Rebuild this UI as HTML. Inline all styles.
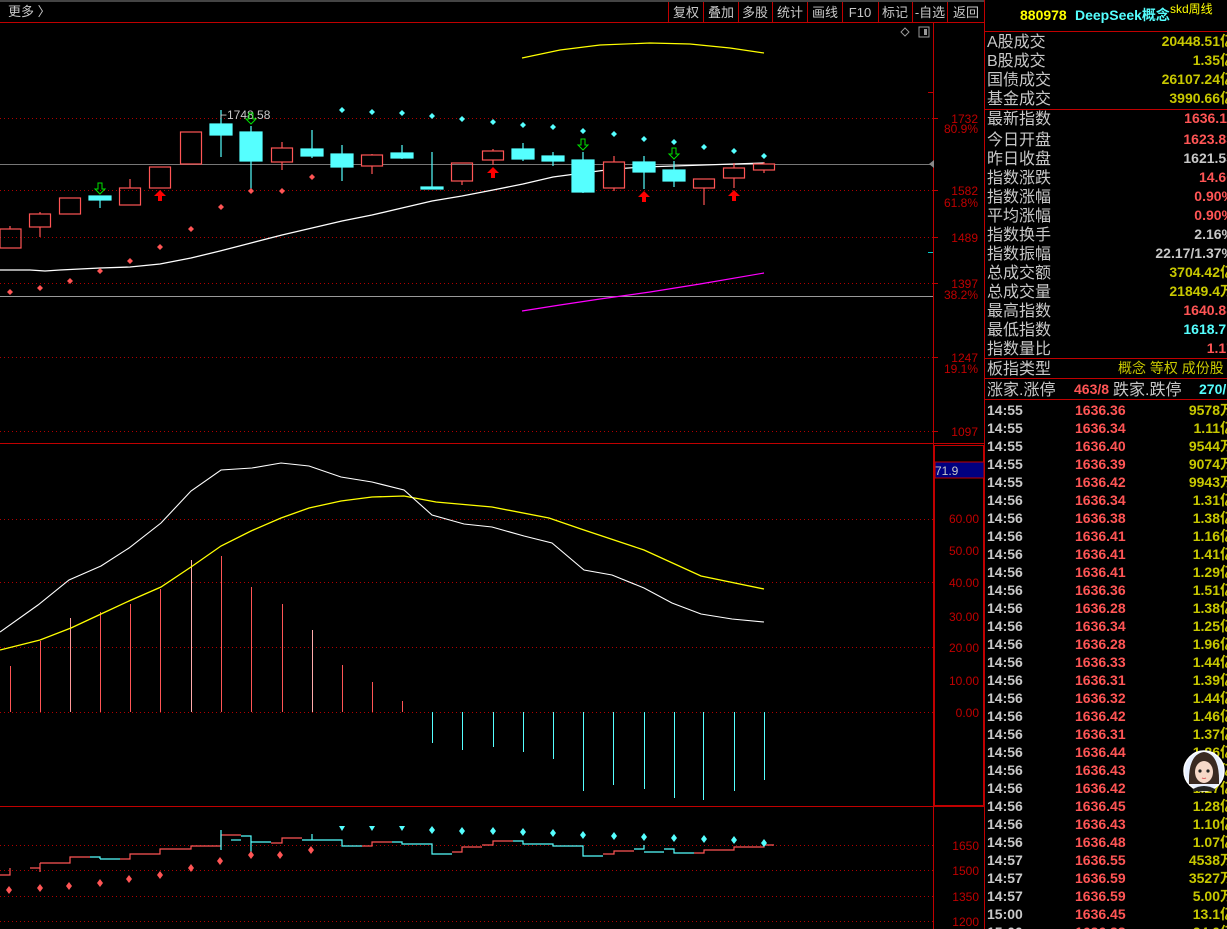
<!DOCTYPE html>
<html><head><meta charset="utf-8"><style>
html,body{margin:0;padding:0;background:#000;overflow:hidden}
svg{display:block}
text{font-family:"Liberation Sans","Noto Sans CJK SC",sans-serif}
</style></head><body>
<svg width="1227" height="929" viewBox="0 0 1227 929" xmlns="http://www.w3.org/2000/svg">
<rect width="1227" height="929" fill="#000"/>
<line x1="0" y1="1" x2="985" y2="1" stroke="#888"/>
<line x1="0" y1="22.5" x2="985" y2="22.5" stroke="#c00000"/>
<text x="8" y="16" font-size="13" fill="#c8c8c8">更多 〉</text>
<g stroke="#c00000">
<line x1="668.5" y1="2" x2="668.5" y2="22"/><line x1="703.5" y1="2" x2="703.5" y2="22"/><line x1="738.5" y1="2" x2="738.5" y2="22"/><line x1="772.5" y1="2" x2="772.5" y2="22"/><line x1="807.5" y1="2" x2="807.5" y2="22"/><line x1="842.5" y1="2" x2="842.5" y2="22"/><line x1="878.5" y1="2" x2="878.5" y2="22"/><line x1="912.5" y1="2" x2="912.5" y2="22"/><line x1="947.5" y1="2" x2="947.5" y2="22"/>
</g>
<g font-size="13" fill="#c8c8c8" text-anchor="middle">
<text x="686" y="17">复权</text><text x="721" y="17">叠加</text><text x="755" y="17">多股</text><text x="790" y="17">统计</text><text x="825" y="17">画线</text><text x="860" y="17">F10</text><text x="895" y="17">标记</text><text x="930" y="17">-自选</text><text x="966" y="17">返回</text>
</g>
<line x1="933.5" y1="22" x2="933.5" y2="929" stroke="#c00000"/>
<line x1="984.5" y1="0" x2="984.5" y2="929" stroke="#c00000"/>
<g stroke="#b00000" stroke-dasharray="1,3">
<line x1="0" y1="118.5" x2="933" y2="118.5"/><line x1="0" y1="190.5" x2="933" y2="190.5"/><line x1="0" y1="237.5" x2="933" y2="237.5"/><line x1="0" y1="283.5" x2="933" y2="283.5"/><line x1="0" y1="357.5" x2="933" y2="357.5"/><line x1="0" y1="431.5" x2="933" y2="431.5"/>
</g>
<line x1="0" y1="164.5" x2="933" y2="164.5" stroke="#777"/>
<line x1="0" y1="296.5" x2="933" y2="296.5" stroke="#999"/>
<polygon points="929,164 934,160 934,168" fill="#888"/>
<line x1="928" y1="92.5" x2="933" y2="92.5" stroke="#c00000"/>
<line x1="928" y1="252.5" x2="933" y2="252.5" stroke="#0cc"/>
<g stroke="#c00000"><line x1="933" y1="118.5" x2="938" y2="118.5"/><line x1="933" y1="190.5" x2="938" y2="190.5"/><line x1="933" y1="237.5" x2="938" y2="237.5"/><line x1="933" y1="283.5" x2="938" y2="283.5"/><line x1="933" y1="357.5" x2="938" y2="357.5"/><line x1="933" y1="431.5" x2="938" y2="431.5"/></g>
<g font-size="12" fill="#c00000" text-anchor="end">
<text x="978" y="123">1732</text><text x="978" y="133">80.9%</text>
<text x="978" y="195">1582</text><text x="978" y="207">61.8%</text>
<text x="978" y="242">1489</text>
<text x="978" y="288">1397</text><text x="978" y="299">38.2%</text>
<text x="978" y="362">1247</text><text x="978" y="373">19.1%</text>
<text x="978" y="436">1097</text>
</g>
<polygon points="905,28 909,32 905,36 901,32" fill="none" stroke="#999"/>
<rect x="919" y="27" width="10" height="10" fill="none" stroke="#999"/><rect x="924" y="29" width="3" height="6" fill="#999"/>
<polyline fill="none" stroke="#ffff00" stroke-width="1.2" points="522,58 560,50 600,45 650,43 690,44 730,48 764,53"/>
<polyline fill="none" stroke="#ff00ff" stroke-width="1.2" points="522,311 560,305 600,299 650,292 700,284 764,273"/>
<polyline fill="none" stroke="#fff" stroke-width="1.3" points="0,270 30,270 45,271 60,270 100,268 130,267 160,264 191,258 220,251 251,243 282,235 312,228 342,221 372,215 402,208 432,201 462,196 493,190 523,184 553,177 583,173 614,169 644,167 674,166 704,165 734,164 764,163"/>
<g stroke="#ff5555" fill="none" stroke-width="1.2">
<line x1="10" y1="226" x2="10" y2="229"/><rect x="0" y="229" width="21" height="19"/>
<line x1="40" y1="212" x2="40" y2="237"/><rect x="29.5" y="214" width="21" height="13" fill="#000"/>
<rect x="59.5" y="198" width="21" height="16"/>
<line x1="130" y1="179" x2="130" y2="188"/><rect x="119.5" y="188" width="21" height="17"/>
<rect x="149.5" y="167" width="21" height="21"/>
<rect x="180.5" y="132" width="21" height="32"/>
<line x1="282" y1="142" x2="282" y2="170"/><rect x="271.5" y="148" width="21" height="14" fill="#000"/>
<line x1="372" y1="154" x2="372" y2="174"/><rect x="361.5" y="155" width="21" height="11" fill="#000"/>
<line x1="462" y1="181" x2="462" y2="185"/><rect x="451.5" y="163" width="21" height="18"/>
<line x1="493" y1="149" x2="493" y2="165"/><rect x="482.5" y="151" width="21" height="9" fill="#000"/>
<line x1="614" y1="156" x2="614" y2="191"/><rect x="603.5" y="162" width="21" height="26" fill="#000"/>
<line x1="704" y1="179" x2="704" y2="205"/><rect x="693.5" y="179" width="21" height="9" fill="#000"/>
<line x1="734" y1="163" x2="734" y2="188"/><rect x="723.5" y="168" width="21" height="10" fill="#000"/>
<line x1="764" y1="162" x2="764" y2="173"/><rect x="753.5" y="164" width="21" height="6" fill="#000"/>
</g>
<g stroke="#55ffff" fill="#55ffff" stroke-width="1.2">
<line x1="100" y1="196" x2="100" y2="208"/><rect x="89" y="196" width="22" height="4"/>
<line x1="221" y1="110" x2="221" y2="157"/><rect x="210" y="124" width="22" height="11"/>
<line x1="251" y1="126" x2="251" y2="191"/><rect x="240" y="132" width="22" height="29"/>
<line x1="312" y1="130" x2="312" y2="158"/><rect x="301" y="149" width="22" height="7"/>
<line x1="342" y1="145" x2="342" y2="181"/><rect x="331" y="154" width="22" height="13"/>
<line x1="402" y1="145" x2="402" y2="159"/><rect x="391" y="153" width="22" height="5"/>
<line x1="432" y1="152" x2="432" y2="189"/><rect x="421" y="187" width="22" height="2"/>
<line x1="523" y1="143" x2="523" y2="161"/><rect x="512" y="149" width="22" height="10"/>
<line x1="553" y1="152" x2="553" y2="166"/><rect x="542" y="156" width="22" height="5"/>
<line x1="583" y1="152" x2="583" y2="193"/><rect x="572" y="160" width="22" height="32"/>
<line x1="644" y1="156" x2="644" y2="189"/><rect x="633" y="162" width="22" height="10"/>
<line x1="674" y1="161" x2="674" y2="187"/><rect x="663" y="170" width="22" height="11"/>
</g>
<text x="220" y="119" font-size="12" fill="#c8c8c8">⌐1748.58</text>
<g fill="#ff5555">
<polygon points="10,289 13,292 10,295 7,292"/><polygon points="40,285 43,288 40,291 37,288"/><polygon points="70,278 73,281 70,284 67,281"/><polygon points="100,268 103,271 100,274 97,271"/><polygon points="130,258 133,261 130,264 127,261"/><polygon points="160,244 163,247 160,250 157,247"/><polygon points="191,226 194,229 191,232 188,229"/><polygon points="221,204 224,207 221,210 218,207"/><polygon points="251,188 254,191 251,194 248,191"/><polygon points="282,188 285,191 282,194 279,191"/><polygon points="312,174 315,177 312,180 309,177"/>
</g>
<g fill="#55ffff">
<polygon points="342,107 345,110 342,113 339,110"/><polygon points="372,109 375,112 372,115 369,112"/><polygon points="402,110 405,113 402,116 399,113"/><polygon points="432,113 435,116 432,119 429,116"/><polygon points="462,116 465,119 462,122 459,119"/><polygon points="493,119 496,122 493,125 490,122"/><polygon points="523,122 526,125 523,128 520,125"/><polygon points="553,124 556,127 553,130 550,127"/><polygon points="583,128 586,131 583,134 580,131"/><polygon points="614,131 617,134 614,137 611,134"/><polygon points="644,136 647,139 644,142 641,139"/><polygon points="674,139 677,142 674,145 671,142"/><polygon points="704,144 707,147 704,150 701,147"/><polygon points="734,148 737,151 734,154 731,151"/><polygon points="764,153 767,156 764,159 761,156"/>
</g>
<g fill="none" stroke="#00e000" stroke-width="1">
<path d="M98,183h4v6h3l-5,5l-5,-5h3z"/><path d="M249,113h4v6h3l-5,5l-5,-5h3z"/><path d="M581,139h4v6h3l-5,5l-5,-5h3z"/><path d="M672,148h4v6h3l-5,5l-5,-5h3z"/>
</g>
<g fill="#ff0000">
<path d="M160,190l6,6h-4v5h-4v-5h-4z"/><path d="M493,167l6,6h-4v5h-4v-5h-4z"/><path d="M644,191l6,6h-4v5h-4v-5h-4z"/><path d="M734,190l6,6h-4v5h-4v-5h-4z"/>
</g>
<line x1="0" y1="443.5" x2="985" y2="443.5" stroke="#c00000"/>
<rect x="934.5" y="445.5" width="49" height="360" fill="none" stroke="#c00000"/>
<rect x="935" y="462" width="49" height="16" fill="#000080" stroke="#c00000"/>
<text x="935" y="475" font-size="12" fill="#c8c8c8">71.9</text>
<g stroke="#b00000" stroke-dasharray="1,3">
<line x1="0" y1="519.5" x2="933" y2="519.5"/><line x1="0" y1="582.5" x2="933" y2="582.5"/><line x1="0" y1="647.5" x2="933" y2="647.5"/><line x1="0" y1="712.5" x2="933" y2="712.5"/>
</g>
<g font-size="12" fill="#c00000" text-anchor="end">
<text x="979" y="523">60.00</text><text x="979" y="555">50.00</text><text x="979" y="587">40.00</text><text x="979" y="621">30.00</text><text x="979" y="652">20.00</text><text x="979" y="685">10.00</text><text x="979" y="717">0.00</text>
</g>
<g stroke="#ff5555" stroke-width="1">
<line x1="10.5" y1="666" x2="10.5" y2="712"/><line x1="40.5" y1="641" x2="40.5" y2="712"/><line x1="70.5" y1="618" x2="70.5" y2="712" stroke="#ff9999"/><line x1="100.5" y1="612" x2="100.5" y2="712"/><line x1="130.5" y1="604" x2="130.5" y2="712"/><line x1="160.5" y1="589" x2="160.5" y2="712"/><line x1="191.5" y1="560" x2="191.5" y2="712" stroke="#ffaaaa"/><line x1="221.5" y1="556" x2="221.5" y2="712"/><line x1="251.5" y1="587" x2="251.5" y2="712"/><line x1="282.5" y1="604" x2="282.5" y2="712"/><line x1="312.5" y1="630" x2="312.5" y2="712" stroke="#ffaaaa"/><line x1="342.5" y1="665" x2="342.5" y2="712"/><line x1="372.5" y1="682" x2="372.5" y2="712"/><line x1="402.5" y1="701" x2="402.5" y2="712"/>
</g>
<g stroke="#55ffff" stroke-width="1">
<line x1="432.5" y1="712" x2="432.5" y2="743"/><line x1="462.5" y1="712" x2="462.5" y2="750"/><line x1="493.5" y1="712" x2="493.5" y2="747"/><line x1="523.5" y1="712" x2="523.5" y2="752"/><line x1="553.5" y1="712" x2="553.5" y2="759"/><line x1="583.5" y1="712" x2="583.5" y2="791"/><line x1="613.5" y1="712" x2="613.5" y2="785"/><line x1="644.5" y1="712" x2="644.5" y2="789"/><line x1="674.5" y1="712" x2="674.5" y2="798"/><line x1="703.5" y1="712" x2="703.5" y2="800"/><line x1="734.5" y1="712" x2="734.5" y2="791"/><line x1="764.5" y1="712" x2="764.5" y2="780"/>
</g>
<polyline fill="none" stroke="#ffff00" stroke-width="1.3" points="0,650 40,640 71,628 101,614 129,601 161,587 191,567 221,546 251,531 281,518 309,508 341,501 372,497 404,496 436,502 492,507 549,518 581,529 644,550 701,576 764,589"/>
<polyline fill="none" stroke="#fff" stroke-width="1.1" points="0,632 38,605 69,580 101,566 129,548 161,523 191,491 221,470 252,468 281,463 309,466 341,477 372,482 404,490 432,515 464,524 492,527 524,536 552,543 584,570 612,575 644,588 672,603 701,614 732,619 764,622"/>
<line x1="0" y1="806.5" x2="985" y2="806.5" stroke="#c00000"/>
<g stroke="#b00000" stroke-dasharray="1,3">
<line x1="0" y1="845.5" x2="933" y2="845.5"/><line x1="0" y1="870.5" x2="933" y2="870.5"/><line x1="0" y1="896.5" x2="933" y2="896.5"/><line x1="0" y1="921.5" x2="933" y2="921.5"/>
</g>
<g font-size="12" fill="#c00000" text-anchor="end">
<text x="979" y="850">1650</text><text x="979" y="875">1500</text><text x="979" y="901">1350</text><text x="979" y="926">1200</text>
</g>
<g fill="none" stroke-width="1.2">
<path d="M0,875h10v-7" stroke="#ff5555"/><path d="M30,868h10v-5" stroke="#ff5555"/><path d="M40,868v4M40,863h20" stroke="#ff5555"/><path d="M60,863h10v-6h20" stroke="#ff5555"/><path d="M90,857h10v2" stroke="#55ffff"/><path d="M100,859h20" stroke="#55ffff"/><path d="M120,859h10v-5h20" stroke="#ff5555"/><path d="M150,854h10v-5h20" stroke="#ff5555"/><path d="M180,849h11v-3h20" stroke="#ff5555"/><path d="M211,846h10v-11h20" stroke="#ff5555"/><path d="M221,830v20" stroke="#55ffff"/><path d="M231,840h10" stroke="#55ffff"/><path d="M241,836h10v17M251,842h20" stroke="#55ffff"/><path d="M271,843h11v-5h20" stroke="#ff5555"/><path d="M302,840h10v-6M312,840h20" stroke="#55ffff"/><path d="M332,840h10v6h20" stroke="#55ffff"/><path d="M362,846h10v-4h20" stroke="#ff5555"/><path d="M392,842h10v2h20" stroke="#55ffff"/><path d="M422,844h10v10h20" stroke="#55ffff"/><path d="M452,852h10v-5h20" stroke="#ff5555"/><path d="M482,845h11v-4h20" stroke="#ff5555"/><path d="M513,841h10v3h20" stroke="#55ffff"/><path d="M543,844h10v2h20" stroke="#55ffff"/><path d="M573,846h10v10h20" stroke="#55ffff"/><path d="M603,854h11v-3h20" stroke="#ff5555"/><path d="M634,849h10v-4M644,852h20" stroke="#55ffff"/><path d="M664,849h10v4h20" stroke="#55ffff"/><path d="M694,853h10v-3h20" stroke="#ff5555"/><path d="M724,850h10v-3h20" stroke="#ff5555"/><path d="M754,847h10v-2h10" stroke="#ff5555"/>
</g>
<g fill="#ff5555">
<polygon points="9,886 12,890 9,894 6,890"/><polygon points="40,884 43,888 40,892 37,888"/><polygon points="69,882 72,886 69,890 66,886"/><polygon points="100,879 103,883 100,887 97,883"/><polygon points="129,875 132,879 129,883 126,879"/><polygon points="160,871 163,875 160,879 157,875"/><polygon points="191,864 194,868 191,872 188,868"/><polygon points="220,857 223,861 220,865 217,861"/><polygon points="251,851 254,855 251,859 248,855"/><polygon points="280,851 283,855 280,859 277,855"/><polygon points="311,846 314,850 311,854 308,850"/>
</g>
<g fill="#55ffff">
<polygon points="339,826 345,826 342,831"/><polygon points="369,826 375,826 372,831"/><polygon points="399,826 405,826 402,831"/><polygon points="432,826 435,830 432,834 429,830"/><polygon points="462,827 465,831 462,835 459,831"/><polygon points="493,827 496,831 493,835 490,831"/><polygon points="523,828 526,832 523,836 520,832"/><polygon points="553,829 556,833 553,837 550,833"/><polygon points="583,831 586,835 583,839 580,835"/><polygon points="614,832 617,836 614,840 611,836"/><polygon points="644,833 647,837 644,841 641,837"/><polygon points="674,834 677,838 674,842 671,838"/><polygon points="704,835 707,839 704,843 701,839"/><polygon points="734,836 737,840 734,844 731,840"/><polygon points="764,839 767,843 764,847 761,843"/>
</g>
<!-- right panel -->
<text x="1020" y="20" font-size="14" font-weight="bold" fill="#ffff00">880978</text>
<text x="1075" y="20" font-size="14" font-weight="bold" fill="#55ffff">DeepSeek概念</text>
<text x="1170" y="13" font-size="12" fill="#ffff00">skd周线</text>
<g stroke="#c00000">
<line x1="985" y1="31.5" x2="1227" y2="31.5"/><line x1="985" y1="109.5" x2="1227" y2="109.5"/><line x1="985" y1="358.5" x2="1227" y2="358.5"/><line x1="985" y1="378.5" x2="1227" y2="378.5"/><line x1="985" y1="399.5" x2="1227" y2="399.5"/>
</g>
<g font-size="16" fill="#c8c8c8">
<text x="987" y="47">A股成交</text><text x="987" y="66">B股成交</text><text x="987" y="85">国债成交</text><text x="987" y="104">基金成交</text>
<text x="987" y="124">最新指数</text><text x="987" y="145">今日开盘</text><text x="987" y="164">昨日收盘</text><text x="987" y="183">指数涨跌</text><text x="987" y="202">指数涨幅</text><text x="987" y="221">平均涨幅</text><text x="987" y="240">指数换手</text><text x="987" y="259">指数振幅</text><text x="987" y="278">总成交额</text><text x="987" y="297">总成交量</text><text x="987" y="316">最高指数</text><text x="987" y="335">最低指数</text><text x="987" y="354">指数量比</text><text x="987" y="374">板指类型</text><text x="987" y="395">涨家.涨停</text>
<text x="1113" y="395">跌家.跌停</text>
</g>
<g font-size="14" font-weight="bold" text-anchor="end">
<text x="1234" y="46" fill="#c8c800">20448.51亿</text><text x="1234" y="65" fill="#c8c800">1.35亿</text><text x="1234" y="84" fill="#c8c800">26107.24亿</text><text x="1234" y="103" fill="#c8c800">3990.66亿</text>
<text x="1234" y="123" fill="#ff5555">1636.11</text><text x="1234" y="144" fill="#ff5555">1623.83</text><text x="1234" y="163" fill="#c8c8c8">1621.53</text><text x="1234" y="182" fill="#ff5555">14.60</text><text x="1234" y="201" fill="#ff5555">0.90%</text><text x="1234" y="220" fill="#ff5555">0.90%</text><text x="1234" y="239" fill="#c8c8c8">2.16%</text><text x="1234" y="258" fill="#c8c8c8">22.17/1.37%</text><text x="1234" y="277" fill="#c8c800">3704.42亿</text><text x="1234" y="296" fill="#c8c800">21849.4万</text><text x="1234" y="315" fill="#ff5555">1640.88</text><text x="1234" y="334" fill="#55ffff">1618.71</text><text x="1234" y="353" fill="#ff5555">1.17</text>
</g>
<text x="1118" y="373" font-size="14" fill="#c8c800">概念 等权 成份股</text>
<text x="1074" y="394" font-size="14" font-weight="bold" fill="#ff5555">463/8</text>
<text x="1199" y="394" font-size="14" font-weight="bold" fill="#55ffff">270/</text>
<g font-size="14" font-weight="bold">
<g fill="#c8c8c8">
<text x="987" y="415">14:55</text><text x="987" y="433">14:55</text><text x="987" y="451">14:55</text><text x="987" y="469">14:55</text><text x="987" y="487">14:55</text><text x="987" y="505">14:56</text><text x="987" y="523">14:56</text><text x="987" y="541">14:56</text><text x="987" y="559">14:56</text><text x="987" y="577">14:56</text><text x="987" y="595">14:56</text><text x="987" y="613">14:56</text><text x="987" y="631">14:56</text><text x="987" y="649">14:56</text><text x="987" y="667">14:56</text><text x="987" y="685">14:56</text><text x="987" y="703">14:56</text><text x="987" y="721">14:56</text><text x="987" y="739">14:56</text><text x="987" y="757">14:56</text><text x="987" y="775">14:56</text><text x="987" y="793">14:56</text><text x="987" y="811">14:56</text><text x="987" y="829">14:56</text><text x="987" y="847">14:56</text><text x="987" y="865">14:57</text><text x="987" y="883">14:57</text><text x="987" y="901">14:57</text><text x="987" y="919">15:00</text><text x="987" y="937">15:00</text>
</g>
<g fill="#ff5555">
<text x="1075" y="415">1636.36</text><text x="1075" y="433">1636.34</text><text x="1075" y="451">1636.40</text><text x="1075" y="469">1636.39</text><text x="1075" y="487">1636.42</text><text x="1075" y="505">1636.34</text><text x="1075" y="523">1636.38</text><text x="1075" y="541">1636.41</text><text x="1075" y="559">1636.41</text><text x="1075" y="577">1636.41</text><text x="1075" y="595">1636.36</text><text x="1075" y="613">1636.28</text><text x="1075" y="631">1636.34</text><text x="1075" y="649">1636.28</text><text x="1075" y="667">1636.33</text><text x="1075" y="685">1636.31</text><text x="1075" y="703">1636.32</text><text x="1075" y="721">1636.42</text><text x="1075" y="739">1636.31</text><text x="1075" y="757">1636.44</text><text x="1075" y="775">1636.43</text><text x="1075" y="793">1636.42</text><text x="1075" y="811">1636.45</text><text x="1075" y="829">1636.43</text><text x="1075" y="847">1636.48</text><text x="1075" y="865">1636.55</text><text x="1075" y="883">1636.59</text><text x="1075" y="901">1636.59</text><text x="1075" y="919">1636.45</text><text x="1075" y="937">1636.38</text>
</g>
<g fill="#c8c800" text-anchor="end">
<text x="1234" y="415">9578万</text><text x="1234" y="433">1.11亿</text><text x="1234" y="451">9544万</text><text x="1234" y="469">9074万</text><text x="1234" y="487">9943万</text><text x="1234" y="505">1.31亿</text><text x="1234" y="523">1.38亿</text><text x="1234" y="541">1.16亿</text><text x="1234" y="559">1.41亿</text><text x="1234" y="577">1.29亿</text><text x="1234" y="595">1.51亿</text><text x="1234" y="613">1.38亿</text><text x="1234" y="631">1.25亿</text><text x="1234" y="649">1.96亿</text><text x="1234" y="667">1.44亿</text><text x="1234" y="685">1.39亿</text><text x="1234" y="703">1.44亿</text><text x="1234" y="721">1.46亿</text><text x="1234" y="739">1.37亿</text><text x="1234" y="757">1.86亿</text><text x="1234" y="775">1.27亿</text><text x="1234" y="793">1.27亿</text><text x="1234" y="811">1.28亿</text><text x="1234" y="829">1.10亿</text><text x="1234" y="847">1.07亿</text><text x="1234" y="865">4538万</text><text x="1234" y="883">3527万</text><text x="1234" y="901">5.00万</text><text x="1234" y="919">13.1亿</text><text x="1234" y="937">24.0亿</text>
</g>
</g>
<circle cx="1204" cy="771" r="20" fill="#e8f0ff" stroke="#fff" stroke-width="1.5"/>
<path d="M1189,784 Q1188,754 1204,752 Q1220,754 1219,784 Z" fill="#3a2a22"/>
<ellipse cx="1204" cy="772" rx="9" ry="11" fill="#f6d8c8"/>
<circle cx="1200" cy="771" r="1.6" fill="#222"/><circle cx="1208" cy="771" r="1.6" fill="#222"/>
<path d="M1202,778 q2,1 4,0" stroke="#d66" fill="none"/>
<path d="M1193,789 q11,-6 22,0 v2 h-22z" fill="#222"/>
</svg>
</body></html>
